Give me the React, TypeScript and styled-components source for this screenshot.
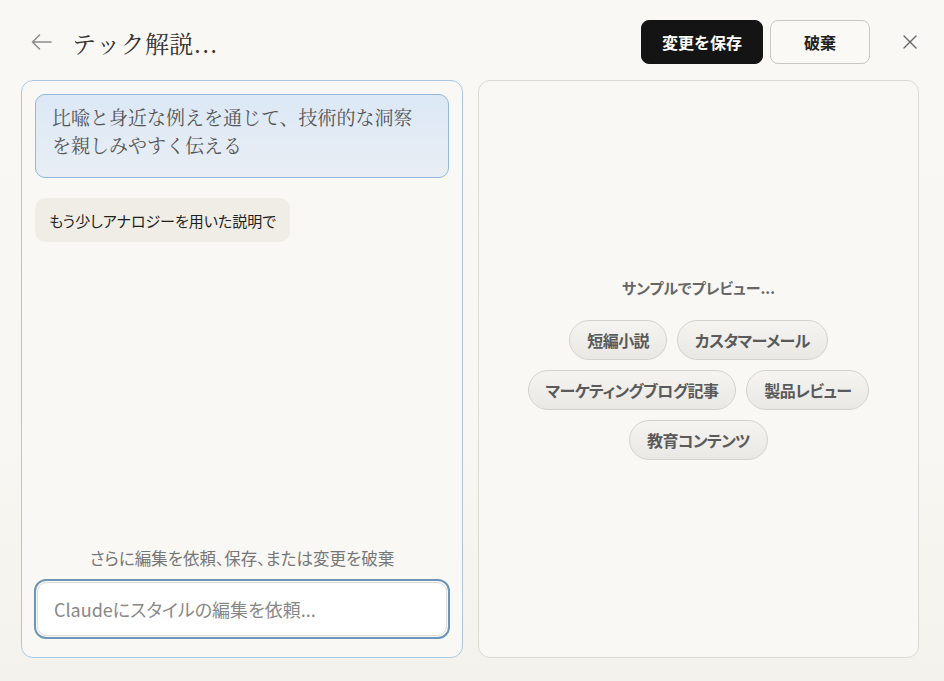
import React from "react";
import styled, { createGlobalStyle } from "styled-components";

const Global = createGlobalStyle`
  html, body { margin: 0; padding: 0; height: 100%; }
  body {
    background: linear-gradient(180deg, #f9f8f5 0%, #f8f7f3 60%, #f3f2ec 100%);
    font-family: "Noto Sans CJK JP", "Noto Sans", sans-serif;
    font-feature-settings: "palt";
    color: #222;
  }
  #root { height: 100%; }
`;

const serif = `"Noto Serif CJK JP", "IPAMincho", "Liberation Serif", "Noto Sans CJK JP", serif`;

const Page = styled.div`
  box-sizing: border-box;
  height: 681px;
  padding: 20px 25px 23px 21px;
  display: flex;
  flex-direction: column;
`;

const Header = styled.div`
  height: 44px;
  display: flex;
  align-items: center;
  margin-bottom: 16px;
`;

const BackButton = styled.button`
  border: 0;
  background: none;
  padding: 0;
  margin-left: 9px;
  width: 22px;
  height: 22px;
  display: flex;
  align-items: center;
  justify-content: center;
  color: #8a8a8a;
  cursor: pointer;
`;

const Title = styled.h1`
  margin: 0 0 0 20px;
  font-family: ${serif};
  font-weight: 400;
  font-size: 24px;
  color: #333;
  letter-spacing: 0.3px;
  flex: 1;
  font-feature-settings: normal;
`;

const Button = styled.button<{ $primary?: boolean }>`
  box-sizing: border-box;
  height: 44px;
  border-radius: 8px;
  font-family: "Noto Sans CJK JP", sans-serif;
  font-weight: 700;
  font-size: 16px;
  cursor: pointer;
  padding: 0;
  width: ${(p) => (p.$primary ? "122px" : "100px")};
  background: ${(p) => (p.$primary ? "#141414" : "#faf9f6")};
  color: ${(p) => (p.$primary ? "#fff" : "#222")};
  border: 1px solid ${(p) => (p.$primary ? "#141414" : "#c9c7c2")};
  margin-left: 7px;
`;

const CloseButton = styled.button`
  border: 0;
  background: none;
  padding: 0;
  margin-left: 30px;
  margin-right: -1px;
  width: 20px;
  height: 20px;
  display: flex;
  align-items: center;
  justify-content: center;
  color: #666;
  cursor: pointer;
`;

const Panels = styled.div`
  flex: 1;
  display: grid;
  grid-template-columns: 442px 441px;
  gap: 15px;
  min-height: 0;
`;

const EditPanel = styled.div`
  box-sizing: border-box;
  border: 1px solid #a9c8e4;
  border-radius: 12px;
  background: #f9f8f5;
  padding: 13px 13px 18px 13px;
  display: flex;
  flex-direction: column;
`;

const StyleBox = styled.div`
  box-sizing: border-box;
  height: 84px;
  border: 1px solid #92b9dd;
  border-radius: 10px;
  background: linear-gradient(180deg, #dce8f6 0%, #e9eef4 100%);
  padding: 8px 26px 8px 16px;
  font-family: ${serif};
  font-feature-settings: normal;
  font-size: 19px;
  line-height: 28px;
  color: #555;
`;

const Bubble = styled.div`
  align-self: flex-start;
  margin-top: 20px;
  height: 44px;
  box-sizing: border-box;
  display: flex;
  align-items: center;
  padding: 0 14px;
  border-radius: 10px;
  background: #efede6;
  font-size: 15px;
  color: #1f1f1f;
`;

const Spacer = styled.div`
  flex: 1;
`;

const Hint = styled.div`
  text-align: center;
  font-size: 16.5px;
  color: #777;
  margin-bottom: 9px;
  line-height: 24px;
`;

const InputRing = styled.div`
  box-sizing: border-box;
  height: 60px;
  border: 2px solid #6d95ba;
  border-radius: 12px;
  padding: 1px;
  margin: 0 -1px;
`;

const Input = styled.input`
  box-sizing: border-box;
  width: 100%;
  height: 100%;
  border: 1px solid #dcdcdc;
  border-radius: 10px;
  background: #fff;
  outline: none;
  padding: 0 16px;
  font-family: "Noto Sans CJK JP", sans-serif;
  font-feature-settings: "palt";
  font-size: 18px;
  color: #333;
  caret-color: #222;
  &::placeholder { color: #888; }
`;

const PreviewPanel = styled.div`
  box-sizing: border-box;
  border: 1px solid #dcdad5;
  border-radius: 12px;
  background: #f9f8f5;
  display: flex;
  flex-direction: column;
  align-items: center;
  justify-content: center;
  padding-bottom: 2px;
`;

const PreviewLabel = styled.div`
  font-size: 15px;
  font-weight: 700;
  color: #666;
  margin-bottom: 22px;
`;

const ChipRows = styled.div`
  display: flex;
  flex-direction: column;
  align-items: center;
  gap: 10px;
`;

const ChipRow = styled.div`
  display: flex;
  gap: 10px;
`;

const Chip = styled.button`
  box-sizing: border-box;
  height: 40px;
  padding: 0 17px;
  border-radius: 20px;
  border: 1px solid #d4d2cd;
  background: linear-gradient(180deg, #f5f4f1 0%, #e9e8e4 100%);
  font-family: "Noto Sans CJK JP", sans-serif;
  font-feature-settings: "palt";
  font-weight: 700;
  font-size: 16px;
  letter-spacing: -0.6px;
  color: #5a5a5a;
  cursor: pointer;
`;

const rows = [
  ["短編小説", "カスタマーメール"],
  ["マーケティングブログ記事", "製品レビュー"],
  ["教育コンテンツ"],
];

export default function App() {
  return (
    <>
      <Global />
      <Page>
        <Header>
          <BackButton aria-label="戻る">
            <svg width="21" height="16" viewBox="0 0 21 16" fill="none" stroke="currentColor" strokeWidth="1.5" strokeLinecap="round" strokeLinejoin="round">
              <path d="M20 8H1.5M8.5 1L1.5 8l7 7" />
            </svg>
          </BackButton>
          <Title>テック解説...</Title>
          <Button $primary>変更を保存</Button>
          <Button>破棄</Button>
          <CloseButton aria-label="閉じる">
            <svg width="14" height="14" viewBox="0 0 14 14" fill="none" stroke="currentColor" strokeWidth="1.4" strokeLinecap="round">
              <path d="M1 1l12 12M13 1L1 13" />
            </svg>
          </CloseButton>
        </Header>
        <Panels>
          <EditPanel>
            <StyleBox>比喩と身近な例えを通じて、技術的な洞察を親しみやすく伝える</StyleBox>
            <Bubble>もう少しアナロジーを用いた説明で</Bubble>
            <Spacer />
            <Hint>さらに編集を依頼、保存、または変更を破棄</Hint>
            <InputRing>
              <Input placeholder="Claudeにスタイルの編集を依頼..." autoFocus />
            </InputRing>
          </EditPanel>
          <PreviewPanel>
            <PreviewLabel>サンプルでプレビュー...</PreviewLabel>
            <ChipRows>
              {rows.map((r, i) => (
                <ChipRow key={i}>
                  {r.map((c) => (
                    <Chip key={c}>{c}</Chip>
                  ))}
                </ChipRow>
              ))}
            </ChipRows>
          </PreviewPanel>
        </Panels>
      </Page>
    </>
  );
}
